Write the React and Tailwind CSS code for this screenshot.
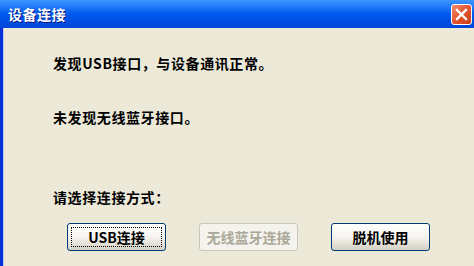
import React from 'react';

const font = { fontFamily: '"Noto Sans CJK SC", "Liberation Sans", sans-serif' };

const XpButton = ({ children, focused, disabled }) => (
  <div className="w-[99px] h-[28px] rounded-[3px] border border-[#003c74] bg-gradient-to-b from-[#ffffff] via-[#f5f4ee] to-[#d6d0c5] p-[3px]">
    <div
      className={`w-full h-full flex items-center justify-center text-[14px] font-bold leading-none ${
        focused ? 'border border-dotted border-black' : 'border border-transparent'
      } ${disabled ? 'text-[#aca899]' : 'text-black'}`}
    >
      {children}
    </div>
  </div>
);

const DisabledButton = ({ children }) => (
  <div className="w-[99px] h-[28px] rounded-[3px] border border-[#c9c7ba] bg-[#f4f3ee] flex items-center justify-center text-[14px] font-bold leading-none text-[#aca899]">
    {children}
  </div>
);

const App = () => {
  return (
    <div className="w-[474px] h-[266px] overflow-hidden flex flex-col bg-[#ece9d8]" style={font}>
      {/* title bar */}
      <div className="h-[28px] shrink-0 flex items-center justify-between pl-[8px] pr-[2px] bg-gradient-to-b from-[#3d95ff] via-[#0058ee] to-[#0046d8]">
        <span className="text-white text-[14px] font-bold tracking-[0.5px] [text-shadow:1px_1px_0_#0a1883]">设备连接</span>
        <div className="w-[21px] h-[21px] rounded-[3px] border border-white bg-gradient-to-br from-[#f08a68] via-[#e2552f] to-[#c83c17] flex items-center justify-center">
          <svg width="13" height="13" viewBox="0 0 13 13">
            <path d="M2 2 L11 11 M11 2 L2 11" stroke="white" strokeWidth="2.4" strokeLinecap="square" />
          </svg>
        </div>
      </div>

      {/* body */}
      <div className="flex-1 flex border-l-[3px] border-[#0831d9]">
        <div className="w-[1px] bg-[#b9c9f0]" />
        <div className="flex-1 flex flex-col pl-[49px] text-[14px] font-bold text-black leading-none">
          <div className="mt-[28px] tracking-[0.6px]">发现USB接口，与设备通讯正常。</div>
          <div className="mt-[40px] tracking-[0.6px]">未发现无线蓝牙接口。</div>
          <div className="mt-[66px] tracking-[0.6px]">请选择连接方式：</div>
          <div className="mt-[19px] ml-[14px] flex gap-[33px]">
            <XpButton focused>USB连接</XpButton>
            <DisabledButton>无线蓝牙连接</DisabledButton>
            <XpButton>脱机使用</XpButton>
          </div>
        </div>
      </div>
    </div>
  );
};

export default App;
